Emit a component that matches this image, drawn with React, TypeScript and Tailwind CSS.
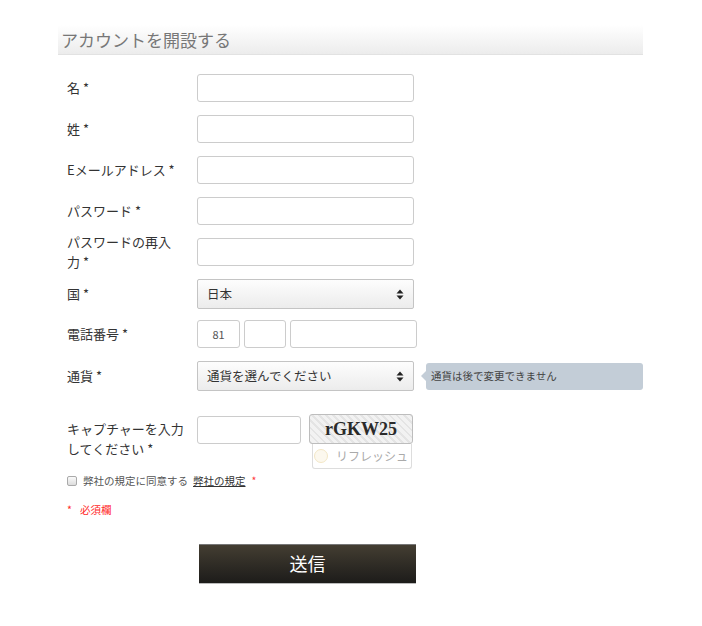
import React from 'react'

const font = { fontFamily: '"Noto Sans CJK JP", "Noto Sans", sans-serif' }

function Arrows() {
  return (
    <svg width="8" height="11" viewBox="0 0 8 11" className="shrink-0">
      <path d="M4 0.5 L7.5 4.5 H0.5 Z" fill="#222" />
      <path d="M4 10.5 L7.5 6.5 H0.5 Z" fill="#222" />
    </svg>
  )
}

function Row({ label, h, children }: { label: React.ReactNode; h: string; children: React.ReactNode }) {
  return (
    <div className={`flex items-center ${h}`}>
      <div className="w-[130px] shrink-0 pr-3 text-[13px] leading-5 text-[#333]">{label}</div>
      {children}
    </div>
  )
}

const inputCls = 'h-[28px] rounded-[3px] border border-[#cccccc] bg-white outline-none'

function Select({ value }: { value: string }) {
  return (
    <div className="flex h-[30px] w-[217px] items-center justify-between rounded-[2px] border border-[#c4c4c4] bg-gradient-to-b from-[#fdfdfd] to-[#ececec] pl-[9px] pr-[9px] text-[12.5px] text-[#333]">
      <span>{value}</span>
      <Arrows />
    </div>
  )
}

export default function App() {
  return (
    <div className="min-h-[626px] bg-white pt-[25px]" style={font}>
      <div className="ml-[58px] w-[585px]">
        <div className="h-[30px] border-b border-[#e2e2e2] bg-gradient-to-b from-white to-[#ececec] pl-[3px] text-[17px] leading-[30px] text-[#777]">
          アカウントを開設する
        </div>

        <div className="flex flex-col gap-[13px] pl-[9px] pt-[19px]">
          <Row h="h-[28px]" label="名 *">
            <input className={`${inputCls} w-[217px]`} />
          </Row>
          <Row h="h-[28px]" label="姓 *">
            <input className={`${inputCls} w-[217px]`} />
          </Row>
          <Row h="h-[28px]" label="Eメールアドレス *">
            <input className={`${inputCls} w-[217px]`} />
          </Row>
          <Row h="h-[28px]" label="パスワード *">
            <input className={`${inputCls} w-[217px]`} type="password" />
          </Row>
          <Row h="h-[28px]" label={<>パスワードの再入<br />力 *</>}>
            <input className={`${inputCls} w-[217px]`} type="password" />
          </Row>
          <Row h="h-[30px]" label="国 *">
            <Select value="日本" />
          </Row>
          <div className="-mt-[2px]">
            <Row h="h-[28px]" label="電話番号 *">
              <div className="flex gap-[4px]">
                <div className={`${inputCls} flex w-[43px] items-center justify-center text-[11px] text-[#555]`}>81</div>
                <div className={`${inputCls} w-[42px]`} />
                <div className={`${inputCls} w-[127px]`} />
              </div>
            </Row>
          </div>
          <Row h="h-[30px]" label="通貨 *">
            <div className="flex items-center">
              <Select value="通貨を選んでください" />
              <div className="ml-[7px] flex items-center">
                <div className="h-0 w-0 border-y-[5px] border-r-[5px] border-y-transparent border-r-[#c3cdd7]" />
                <div className="flex h-[27px] w-[217px] items-center rounded-[3px] bg-[#c3cdd7] pl-[5px] text-[10.5px] text-[#444]">
                  通貨は後で変更できません
                </div>
              </div>
            </div>
          </Row>

          <div className="mt-[10px]">
            <Row h="h-[55px]" label={<div className="-mt-[5px]">キャプチャーを入力<br />してください *</div>}>
              <div className="flex items-start self-start">
                <input className={`${inputCls} mt-[2px] w-[104px]`} />
                <div className="ml-[8px] flex flex-col">
                  <div
                    className="flex h-[30px] w-[104px] items-center justify-center rounded-[3px] border border-[#bdbdbd] text-[18px] font-bold text-[#2a2a2a]"
                    style={{
                      fontFamily: '"Liberation Serif", serif',
                      backgroundImage:
                        'repeating-linear-gradient(45deg, #e4e4e4 0 2px, #f2f2f2 2px 5px), repeating-linear-gradient(-45deg, #d8d8d8 0 1px, transparent 1px 6px)',
                    }}
                  >
                    rGKW25
                  </div>
                  <div className="ml-[3px] flex h-[25px] w-[100px] items-center whitespace-nowrap rounded-b-[3px] border border-t-0 border-[#dddddd] bg-white text-[12px] text-[#aaa]">
                    <span className="ml-[1px] mr-[8px] h-[14px] w-[14px] shrink-0 rounded-full border border-[#f3e7c6] bg-[#fcf8ee]" />
                    リフレッシュ
                  </div>
                </div>
              </div>
            </Row>
          </div>

          <div className="-mt-[9px] flex items-center text-[10.5px] text-[#555]">
            <span className="mr-[6px] h-[10px] w-[10px] rounded-[2px] border border-[#aaa] bg-gradient-to-b from-[#fafafa] to-[#ddd]" />
            <span>弊社の規定に同意する</span>
            <span className="ml-[5px] text-[#333] underline">弊社の規定</span>
            <span className="ml-[6px] text-[#ff3b3b]">*</span>
          </div>

          <div className="flex text-[10.5px] text-[#ff2b2b]">
            <span>*</span>
            <span className="ml-[8px]">必須欄</span>
          </div>

          <div className="mt-[13px] pl-[132px]">
            <button className="h-[40px] w-[217px] border-t border-b border-t-[#777] border-b-[#bbb] bg-gradient-to-b from-[#443e32] to-[#1d1c1a] text-[18px] text-white">
              送信
            </button>
          </div>
        </div>
      </div>
    </div>
  )
}
